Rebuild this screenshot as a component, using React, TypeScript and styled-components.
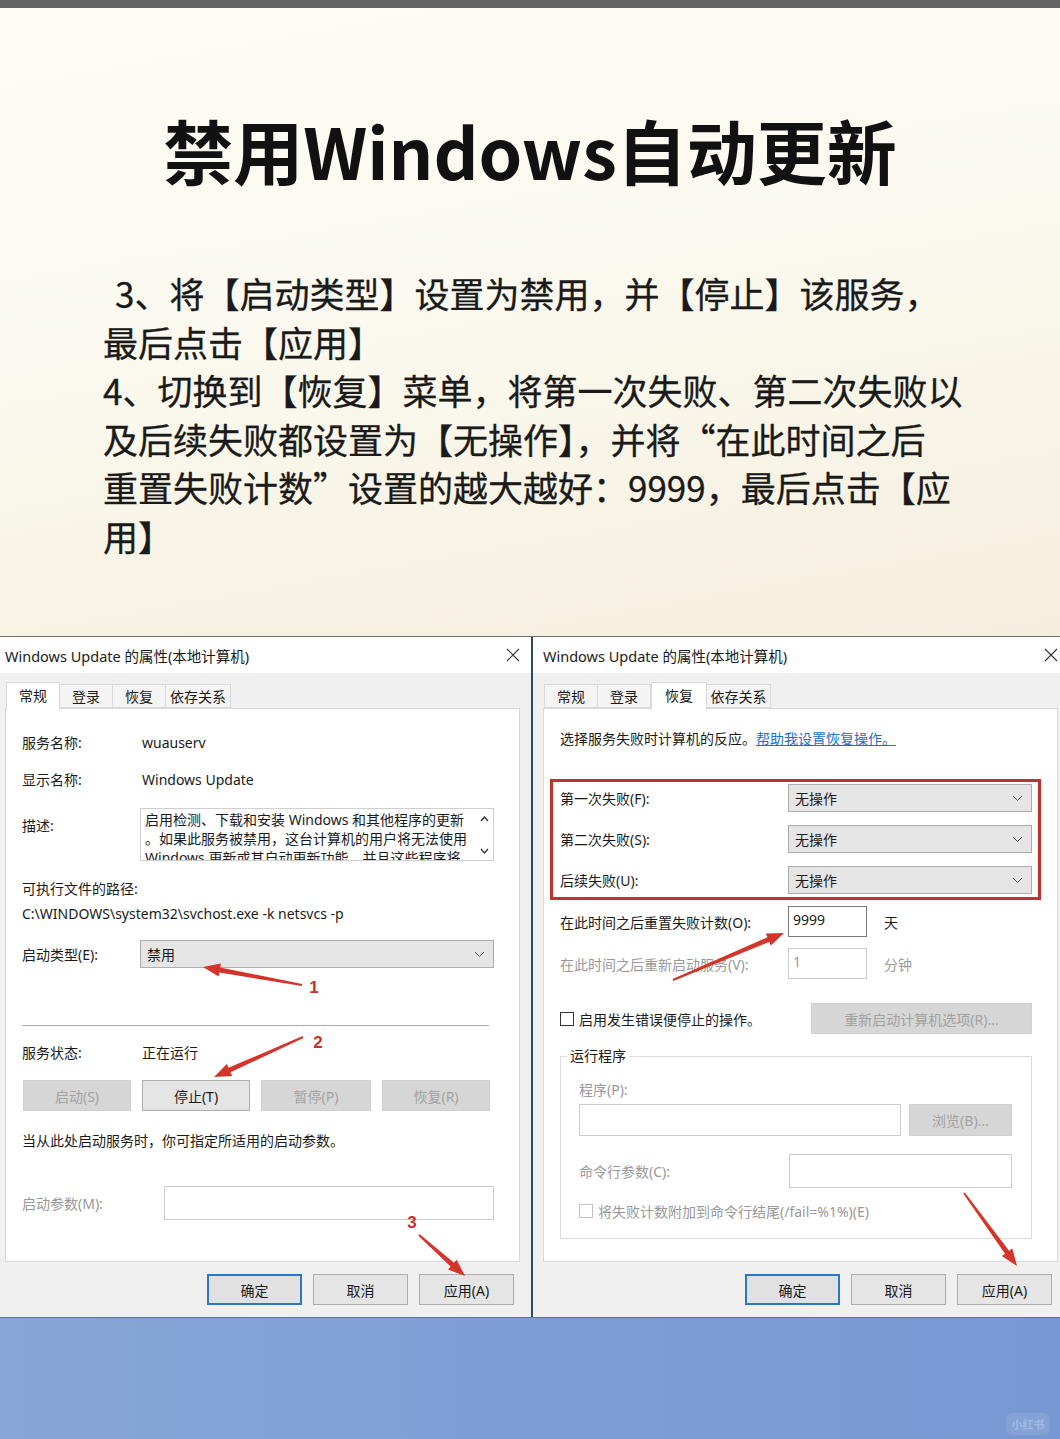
import React from 'react'
import styled, { createGlobalStyle } from 'styled-components'

const GlobalStyle = createGlobalStyle`
  html, body {
    margin: 0;
    padding: 0;
  }
  body {
    width: 1060px;
    height: 1439px;
    overflow: hidden;
    background: #7c9cd4;
    font-family: "Noto Sans CJK SC", sans-serif;
  }
  * {
    box-sizing: border-box;
  }
`

const Page = styled.div`
  width: 1060px;
  height: 1439px;
  display: flex;
  flex-direction: column;
  overflow: hidden;
`

const TopBar = styled.div`
  height: 8px;
  flex-shrink: 0;
  background: #646464;
`

const Poster = styled.section`
  height: 628px;
  flex-shrink: 0;
  display: flex;
  flex-direction: column;
  background: linear-gradient(170deg, #fdfdf6 0%, #fbf9ef 45%, #f4eedd 100%);
`

const Title = styled.h1`
  margin: 107px 0 0;
  text-align: center;
  font: 700 70px/1 "Noto Sans CJK SC", sans-serif;
  color: #111;
`

const Steps = styled.div`
  margin-top: 84px;
  padding-left: 103px;
  font: 400 35px/48.6px "Noto Sans CJK SC", sans-serif;
  color: #1a1a1a;
  -webkit-text-stroke: 0.3px #1a1a1a;
`

const StepLine = styled.span<{ $indent?: number }>`
  display: block;
  white-space: nowrap;
  padding-left: ${p => p.$indent ?? 0}px;
`

const DialogRow = styled.div`
  position: relative;
  display: flex;
  height: 681px;
  flex-shrink: 0;
  overflow: hidden;
  border-top: 1px solid #6d6d6d;
`

const Dialog = styled.div<{ $first?: boolean }>`
  flex: 0 0 auto;
  width: ${p => (p.$first ? 536 : 538)}px;
  min-width: 0;
  overflow: hidden;
  margin-left: ${p => (p.$first ? -5 : 0)}px;
  border-left: ${p => (p.$first ? 'none' : '2px solid #34485c')};
  display: flex;
  flex-direction: column;
  background: #f0f0f0;
  font-family: "Noto Sans", "Noto Sans CJK SC", sans-serif;
  font-size: 14px;
  color: #1a1a1a;
`

const TitleBar = styled.div`
  height: 36px;
  display: flex;
  align-items: center;
  justify-content: space-between;
  padding: 0 11px 0 10px;
  background: #fff;
  font-size: 14.5px;
  white-space: nowrap;
`

const TabStrip = styled.div`
  display: flex;
  align-items: flex-end;
  height: 26px;
  margin: 9px 0 0 11px;
  position: relative;
  z-index: 1;
`

const Tab = styled.div<{ $active?: boolean; $w: number }>`
  width: ${p => p.$w}px;
  height: ${p => (p.$active ? 28 : 24)}px;
  margin-bottom: ${p => (p.$active ? -2 : 0)}px;
  padding-bottom: ${p => (p.$active ? 4 : 0)}px;
  display: flex;
  align-items: center;
  justify-content: center;
  background: ${p => (p.$active ? '#fff' : '#f4f4f4')};
  border: 1px solid #d9d9d9;
  border-bottom: ${p => (p.$active ? 'none' : '1px solid #d9d9d9')};
  border-left: ${p => (p.$active ? '1px solid #d9d9d9' : 'none')};
  &:first-child {
    border-left: 1px solid #d9d9d9;
  }
`

const Panel = styled.div`
  height: 554px;
  margin: 0 11px 0 10px;
  padding: 0 25px 0 16px;
  display: flex;
  flex-direction: column;
  background: #fff;
  border: 1px solid #d9d9d9;
`

const Row = styled.div<{ $mt: number; $h: number; $top?: boolean }>`
  display: flex;
  align-items: ${p => (p.$top ? 'flex-start' : 'center')};
  justify-content: space-between;
  margin-top: ${p => p.$mt}px;
  height: ${p => p.$h}px;
  flex-shrink: 0;
  min-width: 0;
  white-space: nowrap;
`

const Label = styled.span<{ $w?: number; $muted?: boolean; $pt?: number }>`
  flex: 0 0 ${p => p.$w ?? 120}px;
  padding-top: ${p => p.$pt ?? 0}px;
  color: ${p => (p.$muted ? '#999' : 'inherit')};
`

const Value = styled.span<{ $muted?: boolean }>`
  flex: 1;
  color: ${p => (p.$muted ? '#999' : 'inherit')};
`

const Select = styled.div`
  flex: 1;
  height: 28px;
  display: flex;
  align-items: center;
  justify-content: space-between;
  padding: 0 8px 0 6px;
  background: #e5e5e5;
  border: 1px solid #adadad;
`

const DescBox = styled.div`
  flex: 1;
  min-width: 0;
  height: 53px;
  display: flex;
  background: #fff;
  border: 1px solid #cfcfcf;
`

const DescText = styled.div`
  flex: 1;
  min-width: 0;
  overflow: hidden;
  padding: 1px 0 0 4px;
  line-height: 19px;
`

const DescLine = styled.div`
  white-space: nowrap;
`

const ScrollBar = styled.div`
  flex: 0 0 18px;
  display: flex;
  flex-direction: column;
  justify-content: space-between;
  align-items: center;
  padding: 7px 0 6px;
`

const Divider = styled.div`
  margin: 57px 5px 0 0;
  height: 1px;
  flex-shrink: 0;
  background: #a9a9a9;
`

const ButtonGroup = styled.div`
  display: flex;
  gap: 11px;
  padding-left: 1px;
`

const Button = styled.button<{ $w: number; $disabled?: boolean; $focused?: boolean; $h?: number; $ml?: number }>`
  flex-shrink: 0;
  width: ${p => p.$w}px;
  height: ${p => p.$h ?? 31}px;
  margin-left: ${p => p.$ml ?? 0}px;
  padding: 0;
  font: inherit;
  font-size: 14px;
  background: ${p => (p.$disabled ? '#d6d6d6' : p.$focused ? '#e1e1e1' : '#e5e5e5')};
  color: ${p => (p.$disabled ? '#a2a2a2' : '#1a1a1a')};
  border: ${p =>
    p.$focused ? '2px solid #2a78c8' : p.$disabled ? '1px solid #cfcfcf' : '1px solid #adadad'};
`

const TextInput = styled.div<{ $w?: number; $h: number; $strong?: boolean; $muted?: boolean }>`
  flex: ${p => (p.$w ? `0 0 ${p.$w}px` : '1')};
  height: ${p => p.$h}px;
  padding: 3px 0 0 4px;
  background: #fff;
  border: 1px solid ${p => (p.$strong ? '#7a7a7a' : '#cccccc')};
  color: ${p => (p.$muted ? '#999' : '#1a1a1a')};
`

const Unit = styled.span<{ $muted?: boolean }>`
  margin-left: 17px;
  flex: 1;
  color: ${p => (p.$muted ? '#999' : 'inherit')};
`

const Link = styled.a`
  color: #1a6fd0;
  text-decoration: underline;
`

const FailureBox = styled.div`
  margin: 31px -9px 0 -10px;
  height: 121px;
  flex-shrink: 0;
  padding: 2px 6px 4px 7px;
  display: flex;
  flex-direction: column;
  gap: 13px;
  border: 3px solid #c1312e;
`

const CheckLabel = styled.label<{ $muted?: boolean }>`
  display: flex;
  align-items: center;
  gap: 5px;
  color: ${p => (p.$muted ? '#999' : 'inherit')};
`

const CheckBox = styled.span<{ $muted?: boolean }>`
  width: 14px;
  height: 14px;
  background: #fff;
  border: 1px solid ${p => (p.$muted ? '#c4c4c4' : '#333')};
`

const GroupBox = styled.div`
  margin-top: 22px;
  height: 183px;
  flex-shrink: 0;
  display: flex;
  flex-direction: column;
  padding: 0 19px 0 18px;
  border: 1px solid #dcdcdc;
`

const Legend = styled.div`
  align-self: flex-start;
  height: 20px;
  line-height: 20px;
  margin: -11px 0 0 -12px;
  padding: 0 3px;
  background: #fff;
`

const Footer = styled.div`
  display: flex;
  justify-content: flex-end;
  gap: 11px;
  margin-top: 12px;
  padding-right: 17px;
`

const Desktop = styled.div`
  flex: 1;
  display: flex;
  justify-content: flex-end;
  align-items: flex-end;
  padding: 0 10px 4px 0;
  background: linear-gradient(90deg, #88a6d7 0%, #7d9ed5 50%, #7898d3 100%);
  border-top: 1px solid #5a739c;
`

const Watermark = styled.div`
  width: 44px;
  height: 22px;
  display: flex;
  align-items: center;
  justify-content: center;
  border-radius: 6px;
  background: rgba(255, 255, 255, 0.1);
  color: rgba(255, 255, 255, 0.25);
  font: 700 11px "Noto Sans CJK SC", sans-serif;
`

const Overlay = styled.svg`
  position: absolute;
  left: 0;
  top: 0;
  pointer-events: none;
  z-index: 5;
`

const CloseIcon = () => (
  <svg width="14" height="14" viewBox="0 0 14 14">
    <path d="M1 1 L13 13 M13 1 L1 13" stroke="#333" strokeWidth="1.1" fill="none" />
  </svg>
)

const Chevron = () => (
  <svg width="11" height="7" viewBox="0 0 11 7">
    <polyline points="1,1 5.5,5.5 10,1" stroke="#555" strokeWidth="1" fill="none" />
  </svg>
)

const ScrollArrow = ({ up }: { up?: boolean }) => (
  <svg width="9" height="6" viewBox="0 0 9 6">
    <polyline
      points={up ? '1,5 4.5,1 8,5' : '1,1 4.5,5 8,1'}
      stroke="#333"
      strokeWidth="1.3"
      fill="none"
    />
  </svg>
)

function arrowPoints(x1: number, y1: number, x2: number, y2: number) {
  const headLen = 17
  const headW = 13
  const tailW = 2
  const neckW = 5
  const dx = x2 - x1
  const dy = y2 - y1
  const len = Math.hypot(dx, dy)
  const ux = dx / len
  const uy = dy / len
  const px = -uy
  const py = ux
  const bx = x2 - ux * headLen
  const by = y2 - uy * headLen
  const pts = [
    [x1 + (px * tailW) / 2, y1 + (py * tailW) / 2],
    [bx + (px * neckW) / 2, by + (py * neckW) / 2],
    [bx + (px * headW) / 2, by + (py * headW) / 2],
    [x2, y2],
    [bx - (px * headW) / 2, by - (py * headW) / 2],
    [bx - (px * neckW) / 2, by - (py * neckW) / 2],
    [x1 - (px * tailW) / 2, y1 - (py * tailW) / 2],
  ]
  return pts.map(p => `${p[0].toFixed(1)},${p[1].toFixed(1)}`).join(' ')
}

const arrows = [
  { from: [302, 985], to: [203, 967] },
  { from: [303, 1037], to: [214, 1077] },
  { from: [419, 1235], to: [465, 1276] },
  { from: [673, 980], to: [784, 933] },
  { from: [964, 1193], to: [1017, 1266] },
]

const marks = [
  { n: '1', x: 314, y: 987 },
  { n: '2', x: 318, y: 1042 },
  { n: '3', x: 412, y: 1222 },
]

const Annotations = () => (
  <Overlay width="1060" height="681" viewBox="0 637 1060 681">
    {arrows.map((a, i) => (
      <polygon key={i} points={arrowPoints(a.from[0], a.from[1], a.to[0], a.to[1])} fill="#d5342b" />
    ))}
    {marks.map(m => (
      <text
        key={m.n}
        x={m.x}
        y={m.y}
        textAnchor="middle"
        dominantBaseline="central"
        fill="#c8302a"
        fontFamily="Liberation Sans, Arial, sans-serif"
        fontWeight="700"
        fontSize="17"
      >
        {m.n}
      </text>
    ))}
  </Overlay>
)

const tabDefs = (active: number, widths: number[]) =>
  ['常规', '登录', '恢复', '依存关系'].map((t, i) => (
    <Tab key={t} $w={widths[i]} $active={i === active}>
      {t}
    </Tab>
  ))

const DialogFrame = ({
  first,
  active,
  widths,
  children,
}: {
  first?: boolean
  active: number
  widths: number[]
  children: React.ReactNode
}) => (
  <Dialog $first={first}>
    <TitleBar>
      <span>Windows Update 的属性(本地计算机)</span>
      <CloseIcon />
    </TitleBar>
    <TabStrip>{tabDefs(active, widths)}</TabStrip>
    <Panel>{children}</Panel>
    <Footer>
      <Button $w={95} $focused>确定</Button>
      <Button $w={95}>取消</Button>
      <Button $w={95}>应用(A)</Button>
    </Footer>
  </Dialog>
)

const GeneralTab = () => (
  <DialogFrame first active={0} widths={[54, 53, 53, 65]}>
    <Row $mt={23} $h={20}>
      <Label>服务名称:</Label>
      <Value>wuauserv</Value>
    </Row>
    <Row $mt={17} $h={20}>
      <Label>显示名称:</Label>
      <Value>Windows Update</Value>
    </Row>
    <Row $mt={19} $h={53} $top>
      <Label $w={118} $pt={7}>描述:</Label>
      <DescBox>
        <DescText>
          <DescLine>启用检测、下载和安装 Windows 和其他程序的更新</DescLine>
          <DescLine>。如果此服务被禁用，这台计算机的用户将无法使用</DescLine>
          <DescLine>Windows 更新或其自动更新功能，并且这些程序将</DescLine>
        </DescText>
        <ScrollBar>
          <ScrollArrow up />
          <ScrollArrow />
        </ScrollBar>
      </DescBox>
    </Row>
    <Row $mt={17} $h={20}>
      <Label $w={300}>可执行文件的路径:</Label>
    </Row>
    <Row $mt={5} $h={20}>
      <Value>C:\WINDOWS\system32\svchost.exe -k netsvcs -p</Value>
    </Row>
    <Row $mt={17} $h={28}>
      <Label $w={118}>启动类型(E):</Label>
      <Select>
        <span>禁用</span>
        <Chevron />
      </Select>
    </Row>
    <Divider />
    <Row $mt={16} $h={20}>
      <Label>服务状态:</Label>
      <Value>正在运行</Value>
    </Row>
    <Row $mt={18} $h={31}>
      <ButtonGroup>
        <Button $w={108} $disabled>启动(S)</Button>
        <Button $w={108}>停止(T)</Button>
        <Button $w={110} $disabled>暂停(P)</Button>
        <Button $w={108} $disabled>恢复(R)</Button>
      </ButtonGroup>
    </Row>
    <Row $mt={19} $h={20}>
      <Value>当从此处启动服务时，你可指定所适用的启动参数。</Value>
    </Row>
    <Row $mt={36} $h={34}>
      <Label $w={142} $muted>启动参数(M):</Label>
      <TextInput $h={34} />
    </Row>
  </DialogFrame>
)

const RecoveryTab = () => (
  <DialogFrame active={2} widths={[54, 53, 56, 64]}>
    <Row $mt={19} $h={20}>
      <Value>
        选择服务失败时计算机的反应。<Link>帮助我设置恢复操作。</Link>
      </Value>
    </Row>
    <FailureBox>
      {['第一次失败(F):', '第二次失败(S):', '后续失败(U):'].map(l => (
        <Row key={l} $mt={0} $h={28}>
          <Label $w={228}>{l}</Label>
          <Select>
            <span>无操作</span>
            <Chevron />
          </Select>
        </Row>
      ))}
    </FailureBox>
    <Row $mt={6} $h={31}>
      <Label $w={228}>在此时间之后重置失败计数(O):</Label>
      <TextInput $w={79} $h={31} $strong>9999</TextInput>
      <Unit>天</Unit>
    </Row>
    <Row $mt={11} $h={31}>
      <Label $w={228} $muted>在此时间之后重新启动服务(V):</Label>
      <TextInput $w={79} $h={31} $muted>1</TextInput>
      <Unit $muted>分钟</Unit>
    </Row>
    <Row $mt={24} $h={31}>
      <CheckLabel>
        <CheckBox />
        启用发生错误便停止的操作。
      </CheckLabel>
      <Button $w={221} $disabled>重新启动计算机选项(R)...</Button>
    </Row>
    <GroupBox>
      <Legend>运行程序</Legend>
      <Row $mt={13} $h={20}>
        <Label $muted>程序(P):</Label>
      </Row>
      <Row $mt={5} $h={32}>
        <TextInput $h={32} />
        <Button $w={103} $h={32} $ml={8} $disabled>
          浏览(B)...
        </Button>
      </Row>
      <Row $mt={18} $h={34}>
        <Label $w={210} $muted>命令行参数(C):</Label>
        <TextInput $h={34} />
      </Row>
      <Row $mt={15} $h={16}>
        <CheckLabel $muted>
          <CheckBox $muted />
          将失败计数附加到命令行结尾(/fail=%1%)(E)
        </CheckLabel>
      </Row>
    </GroupBox>
  </DialogFrame>
)

export default function App() {
  return (
    <Page lang="zh-CN">
      <GlobalStyle />
      <TopBar />
      <Poster>
        <Title>禁用Windows自动更新</Title>
        <Steps>
          <StepLine $indent={12}>3、将【启动类型】设置为禁用，并【停止】该服务，</StepLine>
          <StepLine>最后点击【应用】</StepLine>
          <StepLine>4、切换到【恢复】菜单，将第一次失败、第二次失败以</StepLine>
          <StepLine>及后续失败都设置为【无操作】，并将“在此时间之后</StepLine>
          <StepLine>重置失败计数”设置的越大越好：9999，最后点击【应</StepLine>
          <StepLine>用】</StepLine>
        </Steps>
      </Poster>
      <DialogRow>
        <GeneralTab />
        <RecoveryTab />
        <Annotations />
      </DialogRow>
      <Desktop>
        <Watermark>小红书</Watermark>
      </Desktop>
    </Page>
  )
}
